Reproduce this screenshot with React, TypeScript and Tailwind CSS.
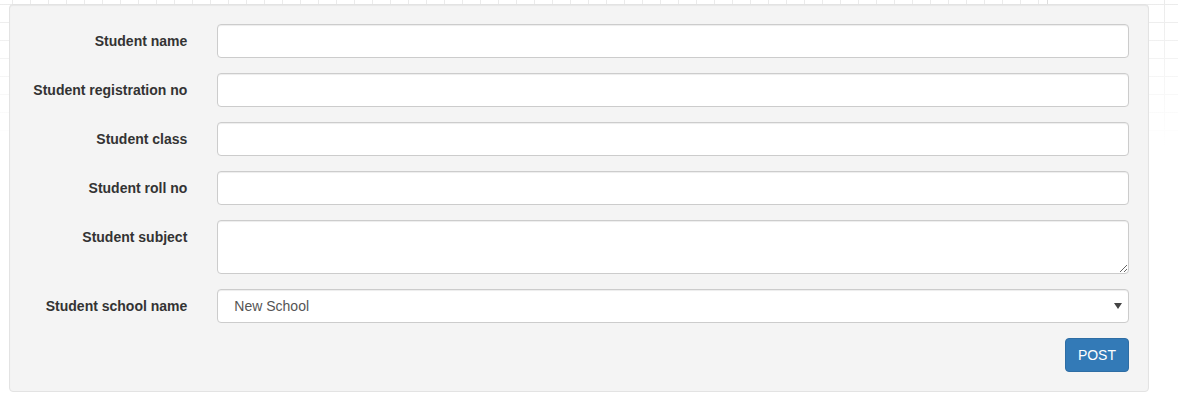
import React from 'react'

const fields = [
  { label: 'Student name', kind: 'input' },
  { label: 'Student registration no', kind: 'input' },
  { label: 'Student class', kind: 'input' },
  { label: 'Student roll no', kind: 'input' },
  { label: 'Student subject', kind: 'textarea' },
]

const control =
  'block w-full rounded-[4px] border border-[#cccccc] bg-white px-[12px] text-[14px] text-[#555555] shadow-[inset_0_1px_1px_rgba(0,0,0,0.075)] outline-none'

function FormRow({ label, children }: { label: string; children: React.ReactNode }) {
  return (
    <div className="-mx-[15px] mb-[15px] flex">
      <label className="w-1/6 shrink-0 px-[15px] pt-[7px] text-right text-[14px] font-bold leading-[20px] text-[#333333]">
        {label}
      </label>
      <div className="w-5/6 px-[15px]">{children}</div>
    </div>
  )
}

export default function App() {
  return (
    <div
      className="min-h-[404px] w-[1178px] bg-white bg-[linear-gradient(to_bottom,rgba(255,255,255,0)_0px,#ffffff_145px,#ffffff_100%),linear-gradient(to_right,#ebebeb_1px,transparent_1px),linear-gradient(to_bottom,#ebebeb_1px,transparent_1px)] bg-[size:100%_100%,18px_18px,18px_18px] bg-[position:0_0,12px_4px,12px_4px] pl-[9px] font-['Liberation_Sans',Arial,sans-serif]"
    >
      {/* edge of a box above, cut off */}
      <div className="ml-[1038px] h-[4px] w-[101px] border-l border-[#dddddd] bg-white" />
      <div className="w-[1140px] rounded-[4px] border border-[#e3e3e3] bg-[#f4f4f4] p-[19px] shadow-[inset_0_1px_1px_rgba(0,0,0,0.05)]">
        <form onSubmit={(e) => e.preventDefault()}>
          {fields.map((f) => (
            <FormRow key={f.label} label={f.label}>
              {f.kind === 'textarea' ? (
                <textarea rows={2} className={`${control} h-[54px] py-[6px] leading-[20px]`} />
              ) : (
                <input type="text" className={`${control} h-[34px] py-[6px] leading-[20px]`} />
              )}
            </FormRow>
          ))}
          <FormRow label="Student school name">
            <div className="relative">
              <select
                defaultValue="New School"
                className={`${control} h-[34px] appearance-none pl-[16px] leading-[20px]`}
              >
                <option>New School</option>
              </select>
              <span className="pointer-events-none absolute right-[7px] top-[14px] h-0 w-0 border-x-[4px] border-t-[6px] border-x-transparent border-t-[#444444]" />
            </div>
          </FormRow>
          <div className="flex justify-end">
            <button
              type="submit"
              className="h-[34px] rounded-[4px] border border-[#2e6da4] bg-[#337ab7] px-[12px] text-[14px] leading-[20px] text-white"
            >
              POST
            </button>
          </div>
        </form>
      </div>
    </div>
  )
}
